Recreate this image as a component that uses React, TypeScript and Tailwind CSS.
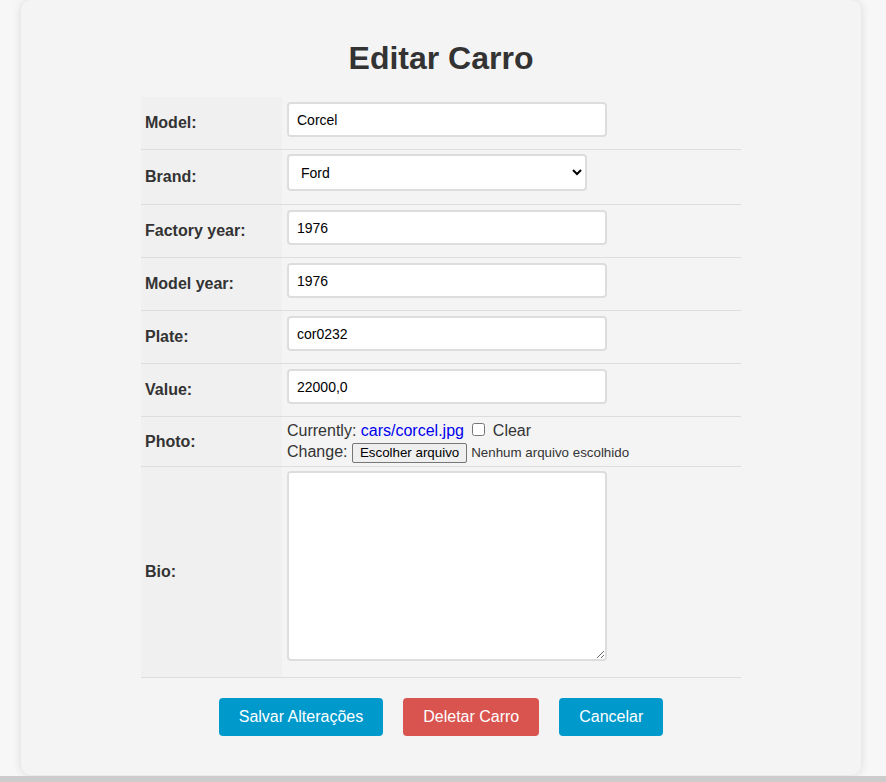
import React from "react";

function Row({
  label,
  children,
  cellClass,
}: {
  label: string;
  children: React.ReactNode;
  cellClass: string;
}) {
  return (
    <div className="flex border-b border-[#dddddd]">
      <div className="w-[141px] shrink-0 bg-[#f0f0f0] pl-[4px] flex items-center font-bold text-[16px] text-[#333333]">
        {label}
      </div>
      <div className={"flex-1 pl-[5px] " + cellClass}>{children}</div>
    </div>
  );
}

const inputCls =
  "block w-[320px] h-[35px] px-[8px] text-[14px] text-black bg-white border-2 border-[#dddddd] rounded-[4px] outline-none font-['Liberation_Sans',Arial,sans-serif]";

export default function App() {
  return (
    <div className="min-h-[782px] bg-[#f7f7f7] font-['Liberation_Sans',Arial,sans-serif] text-[#333333] overflow-hidden">
      <div className="ml-[21px] w-[840px] bg-[#f4f4f4] rounded-[10px] shadow-[0_0_10px_rgba(0,0,0,0.12)] pt-[40px] pb-[39px]">
        <h1 className="text-center text-[32px] leading-[37px] font-bold text-[#333333] mb-[20px]">
          Editar Carro
        </h1>
        <div className="w-[600px] mx-auto">
          <Row label="Model:" cellClass="pt-[5px] pb-[12px]">
            <input className={inputCls} defaultValue="Corcel" />
          </Row>
          <Row label="Brand:" cellClass="pt-[4px] pb-[13px]">
            <select
              className="block w-[300px] h-[37px] px-[8px] text-[14px] text-black bg-white border-2 border-[#dddddd] rounded-[4px] outline-none font-['Liberation_Sans',Arial,sans-serif]"
              defaultValue="Ford"
            >
              <option>Ford</option>
              <option>Chevrolet</option>
              <option>Volkswagen</option>
            </select>
          </Row>
          <Row label="Factory year:" cellClass="pt-[5px] pb-[12px]">
            <input className={inputCls} defaultValue="1976" />
          </Row>
          <Row label="Model year:" cellClass="pt-[5px] pb-[12px]">
            <input className={inputCls} defaultValue="1976" />
          </Row>
          <Row label="Plate:" cellClass="pt-[5px] pb-[12px]">
            <input className={inputCls} defaultValue="cor0232" />
          </Row>
          <Row label="Value:" cellClass="pt-[5px] pb-[12px]">
            <input className={inputCls} defaultValue="22000,0" />
          </Row>
          <Row label="Photo:" cellClass="pt-[5px] h-[49px] text-[16px] text-[#333333]">
            <div className="leading-[18px] h-[18px] whitespace-nowrap">
              Currently: <a href="#" className="text-[#0000ee]">cars/corcel.jpg</a>{" "}
              <input type="checkbox" className="w-[13px] h-[13px] ml-[4px] mr-[3px] align-baseline" />{" "}
              <span>Clear</span>
            </div>
            <div className="whitespace-nowrap leading-normal">
              Change:{" "}
              <button
                type="button"
                className="inline-block text-[13.33px] leading-[16px] text-black px-[7px] py-[1px] border border-[#767676] rounded-[2px] bg-[#efefef] mr-[4px] font-['Liberation_Sans',Arial,sans-serif]"
              >
                Escolher arquivo
              </button>
              <span className="text-[13.33px] text-[#333333]">Nenhum arquivo escolhido</span>
            </div>
          </Row>
          <Row label="Bio:" cellClass="pt-[4px] pb-[16px]">
            <textarea className="block w-[320px] h-[190px] p-[8px] text-[14px] bg-white border-2 border-[#dddddd] rounded-[4px] outline-none resize" />
          </Row>
        </div>
        <div className="mt-[20px] flex justify-center gap-[20px]">
          <button className="h-[38px] px-[20px] rounded-[4px] bg-[#0099cc] text-white text-[16px]">
            Salvar Alterações
          </button>
          <button className="h-[38px] px-[20px] rounded-[4px] bg-[#d9534f] text-white text-[16px]">
            Deletar Carro
          </button>
          <button className="h-[38px] px-[20px] rounded-[4px] bg-[#0099cc] text-white text-[16px]">
            Cancelar
          </button>
        </div>
      </div>
      <div className="mt-[1px] h-[20px] bg-[#cccccc]" />
    </div>
  );
}
